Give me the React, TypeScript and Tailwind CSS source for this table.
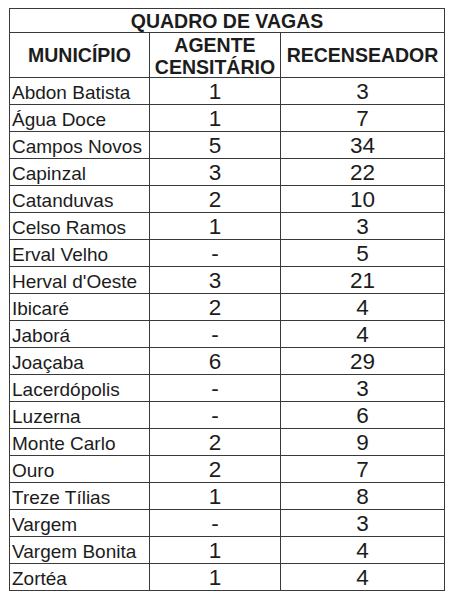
import React from "react";

const rows: [string, string, string][] = [
  ["Abdon Batista", "1", "3"],
  ["Água Doce", "1", "7"],
  ["Campos Novos", "5", "34"],
  ["Capinzal", "3", "22"],
  ["Catanduvas", "2", "10"],
  ["Celso Ramos", "1", "3"],
  ["Erval Velho", "-", "5"],
  ["Herval d'Oeste", "3", "21"],
  ["Ibicaré", "2", "4"],
  ["Jaborá", "-", "4"],
  ["Joaçaba", "6", "29"],
  ["Lacerdópolis", "-", "3"],
  ["Luzerna", "-", "6"],
  ["Monte Carlo", "2", "9"],
  ["Ouro", "2", "7"],
  ["Treze Tílias", "1", "8"],
  ["Vargem", "-", "3"],
  ["Vargem Bonita", "1", "4"],
  ["Zortéa", "1", "4"],
];

export default function App() {
  return (
    <div
      className="w-[453px] h-[600px] bg-white pt-[8px] pl-[9px] text-[#1c1c1c]"
      style={{ fontFamily: '"Liberation Sans", Arial, sans-serif' }}
    >
      <div className="w-[436px] border-l border-t border-[#3a3a3a] grid grid-cols-[140px_131px_164px]">
        <div className="col-span-3 h-[24px] border-r border-b border-[#3a3a3a] flex items-center justify-center pt-[2px] font-bold text-[19.5px] leading-none">
          QUADRO DE VAGAS
        </div>
        <div className="h-[45px] border-r border-b border-[#3a3a3a] flex items-center justify-center pt-[1px] font-bold text-[19.5px] leading-none">
          MUNICÍPIO
        </div>
        <div className="h-[45px] border-r border-b border-[#3a3a3a] flex flex-col items-center justify-center pt-[1px] font-bold text-[19.5px] leading-[22px] text-center">
          <span>AGENTE</span>
          <span>CENSITÁRIO</span>
        </div>
        <div className="h-[45px] border-r border-b border-[#3a3a3a] flex items-center justify-center pt-[1px] font-bold text-[19.5px] leading-none">
          RECENSEADOR
        </div>
        {rows.map(([m, a, r]) => (
          <React.Fragment key={m}>
            <div className="h-[27px] border-r border-b border-[#3a3a3a] flex items-center pl-[2px] pt-[3px] text-[19px] leading-none whitespace-nowrap">
              {m}
            </div>
            <div className="h-[27px] border-r border-b border-[#3a3a3a] flex items-center justify-center pt-[2px] text-[22.5px] leading-none">
              {a}
            </div>
            <div className="h-[27px] border-r border-b border-[#3a3a3a] flex items-center justify-center pt-[2px] text-[22.5px] leading-none">
              {r}
            </div>
          </React.Fragment>
        ))}
      </div>
    </div>
  );
}
